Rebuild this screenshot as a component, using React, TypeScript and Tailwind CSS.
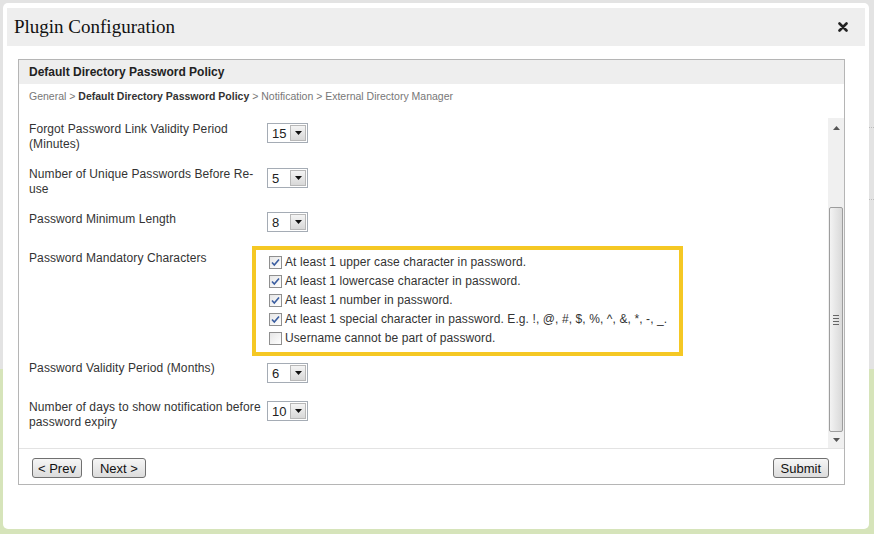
import React from "react";

const sans = { fontFamily: '"Liberation Sans", Arial, sans-serif' };

function Select({ value }: { value: string }) {
  return (
    <div className="flex h-[20px] w-[41px] items-stretch border border-[#a5acb5] bg-white">
      <div className="flex flex-1 items-center pl-[4px] text-[13px] leading-none text-[#222]">{value}</div>
      <div className="m-[1px] flex w-[16px] items-center justify-center border border-[#b8b8b8] bg-gradient-to-b from-[#f4f4f4] to-[#d8d8d8]">
        <svg width="7" height="4" viewBox="0 0 7 4">
          <path d="M0 0h7L3.5 4z" fill="#111" />
        </svg>
      </div>
    </div>
  );
}

function Check({ checked, label }: { checked: boolean; label: string }) {
  return (
    <div className="flex h-[19px] items-center gap-[3px]">
      <div className="flex h-[13px] w-[13px] items-center justify-center border border-[#8f8f8f] bg-gradient-to-br from-[#e6e6e6] to-[#ffffff]">
        {checked && (
          <svg width="9" height="9" viewBox="0 0 9 9">
            <path d="M1 4.5l2.3 2.5L8 1.5" fill="none" stroke="#3a5da0" strokeWidth="1.6" />
          </svg>
        )}
      </div>
      <span className="text-[12px] tracking-[0.1px] text-[#333]">{label}</span>
    </div>
  );
}

function Button({ children, pad }: { children: React.ReactNode; pad: string }) {
  return (
    <button className={`h-[20px] rounded-[3px] border border-[#707070] bg-gradient-to-b from-[#f6f6f6] to-[#dcdcdc] text-[13px] leading-none text-[#111] ${pad}`}>
      {children}
    </button>
  );
}

export default function App() {
  return (
    <div className="relative h-[534px] w-[874px] overflow-hidden" style={sans}>
      {/* page behind the modal */}
      <div className="flex h-[369px] bg-[#e3e3e3]">
        <div className="ml-auto w-[6px]">
          <div className="h-[128px] border-b border-dotted border-[#bdbdbd]" />
          <div className="h-[72px] border-b border-dotted border-[#bdbdbd]" />
        </div>
      </div>
      <div className="h-[165px] bg-[#d6e4ba]" />

      {/* modal */}
      <div className="absolute left-[3px] top-[3px] flex h-[526px] w-[866px] flex-col rounded-[5px] bg-white px-[4px] pt-[5px]">
        <div className="flex h-[38px] items-center justify-between bg-[#eeeeee] pl-[7px] pr-[17px]">
          <span className="text-[19px] text-[#111]" style={{ fontFamily: '"Liberation Serif", "Times New Roman", serif' }}>
            Plugin Configuration
          </span>
          <svg width="10" height="10" viewBox="0 0 10 10">
            <path d="M1.5 1.5l7 7M8.5 1.5l-7 7" stroke="#222" strokeWidth="2.6" strokeLinecap="round" />
          </svg>
        </div>

        <div className="ml-[11px] mt-[13px] flex h-[426px] w-[827px] flex-col border border-[#b5b5b5]">
          <div className="flex h-[24px] items-center bg-[#eeeeee] pl-[10px] text-[12px] font-bold text-[#222]">
            Default Directory Password Policy
          </div>
          <div className="h-[34px] pl-[10px] pt-[5px] text-[10.5px] text-[#777]">
            General &gt; <span className="font-bold text-[#333]">Default Directory Password Policy</span> &gt; Notification &gt; External Directory Manager
          </div>

          <div className="flex h-[330px]">
            <div className="flex-1 pl-[10px] pt-[4px] text-[12px] leading-[15px] tracking-[0.1px] text-[#333]">
              <div className="flex items-start">
                <div className="w-[238px]">Forgot Password Link Validity Period (Minutes)</div>
                <div className="mt-[1px]"><Select value="15" /></div>
              </div>
              <div className="mt-[15px] flex items-start">
                <div className="w-[238px]">Number of Unique Passwords Before Re-use</div>
                <div className="mt-[1px]"><Select value="5" /></div>
              </div>
              <div className="mt-[15px] flex items-start">
                <div className="w-[238px]">Password Minimum Length</div>
                <div className="mt-[0px]"><Select value="8" /></div>
              </div>
              <div className="mt-[19px] flex items-start">
                <div className="w-[238px]">Password Mandatory Characters</div>
                <div className="-ml-[15px] -mt-[5px] w-[431px] border-[4px] border-[#f5c824] pb-[4px] pl-[13px] pt-[3px]">
                  <Check checked label="At least 1 upper case character in password." />
                  <Check checked label="At least 1 lowercase character in password." />
                  <Check checked label="At least 1 number in password." />
                  <Check checked label="At least 1 special character in password. E.g. !, @, #, $, %, ^, &, *, -, _." />
                  <Check checked={false} label="Username cannot be part of password." />
                </div>
              </div>
              <div className="mt-[5px] flex items-start">
                <div className="w-[238px]">Password Validity Period (Months)</div>
                <div className="mt-[2px]"><Select value="6" /></div>
              </div>
              <div className="mt-[17px] flex items-start">
                <div className="w-[238px]">Number of days to show notification before password expiry</div>
                <div className="mt-[1px]"><Select value="10" /></div>
              </div>
            </div>

            {/* scrollbar */}
            <div className="flex w-[16px] flex-col items-center bg-[#f0f0f0] pt-[1px]">
              <div className="flex h-[17px] items-center justify-center">
                <svg width="7" height="4" viewBox="0 0 7 4"><path d="M0 4h7L3.5 0z" fill="#555" /></svg>
              </div>
              <div className="mt-[71px] flex h-[225px] w-[14px] items-center justify-center rounded-[2px] border border-[#9d9d9d] bg-gradient-to-r from-[#f3f3f3] to-[#d9d9d9]">
                <div className="flex flex-col gap-[2px]">
                  <div className="h-[1px] w-[6px] bg-[#666]" />
                  <div className="h-[1px] w-[6px] bg-[#666]" />
                  <div className="h-[1px] w-[6px] bg-[#666]" />
                  <div className="h-[1px] w-[6px] bg-[#666]" />
                </div>
              </div>
              <div className="flex h-[16px] items-center justify-center">
                <svg width="7" height="4" viewBox="0 0 7 4"><path d="M0 0h7L3.5 4z" fill="#555" /></svg>
              </div>
            </div>
          </div>

          <div className="flex h-[36px] items-start justify-between border-t border-[#e3e3e3] pl-[13px] pr-[15px] pt-[9px]">
            <div className="flex gap-[10px]">
              <Button pad="px-[5px]">&lt; Prev</Button>
              <Button pad="px-[7px]">Next &gt;</Button>
            </div>
            <Button pad="px-[7px]">Submit</Button>
          </div>
        </div>
      </div>
    </div>
  );
}
